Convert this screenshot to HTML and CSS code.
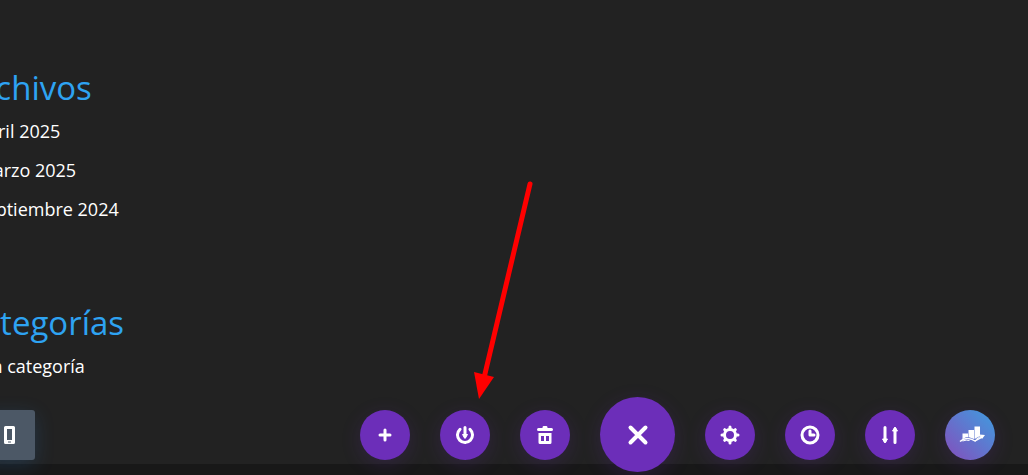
FILE: index.html
```
<!DOCTYPE html>
<html lang="es">
<head>
  <meta charset="UTF-8" />
  <meta name="viewport" content="width=device-width, initial-scale=1.0" />
  <title>Archivos</title>
  <link rel="stylesheet" href="styles.css">
</head>
<body>
  <main class="sidebar">
    <section class="widget">
      <h2>Archivos</h2>
      <ul>
        <li><a href="#">abril 2025</a></li>
        <li><a href="#">marzo 2025</a></li>
        <li><a href="#">septiembre 2024</a></li>
      </ul>
    </section>
    <section class="widget">
      <h2>Categorías</h2>
      <ul>
        <li><a href="#">Sin categoría</a></li>
      </ul>
    </section>
  </main>
  <footer class="footer"></footer>

  <div class="builder-bar">
    <button class="device" type="button" aria-label="Vista de teléfono">
      <svg width="12" height="20" viewBox="0 0 12 20"><path fill="#fff" fill-rule="evenodd" d="M1.500 1h8a1.500 1.500 0 0 1 1.500 1.500v15a1.500 1.500 0 0 1-1.500 1.500h-8A1.500 1.500 0 0 1 0 17.500v-15A1.500 1.500 0 0 1 1.500 1zM3 4v11h5V4zM4 16.500v1h3v-1z"/></svg>
    </button>

    <div class="actions">
      <button class="round" type="button" aria-label="Añadir de la biblioteca">
        <svg width="28" height="28" viewBox="0 0 28 28"><path class="line" d="M14 9v10M9 14h10"/></svg>
      </button>
      <button class="round" type="button" aria-label="Guardar en la biblioteca">
        <svg width="28" height="28" viewBox="0 0 28 28">
          <path class="line" d="M9 8.300a7.500 7.500 0 1 0 10 0M14 6.500v9"/>
          <path fill="#fff" stroke="#fff" stroke-linejoin="round" d="M11.500 13.500h5L14 17.500z"/>
        </svg>
      </button>
      <button class="round" type="button" aria-label="Vaciar diseño">
        <svg width="28" height="28" viewBox="0 0 28 28"><path fill="#fff" fill-rule="evenodd" d="M11.500 6.500q0-1.500 1-1.500h3q1 0 1 1.500V7h4q1.500 0 1.500 1.500T20.500 10h-13Q6 10 6 8.500T7.500 7h4zM7.500 12h13v9.500q0 1.500-1.500 1.500H9q-1.500 0-1.500-1.500zM10 15v5h3v-5zM15 15v5h3v-5z"/></svg>
      </button>
      <button class="round big" type="button" aria-label="Cerrar">
        <svg width="28" height="28" viewBox="0 0 28 28"><path class="line thick" d="M6.500 6.500l15 15M21.500 6.500l-15 15"/></svg>
      </button>
      <button class="round" type="button" aria-label="Ajustes de página">
        <svg width="28" height="28" viewBox="0 0 28 28">
          <circle class="line" cx="14" cy="14" r="5.500"/>
          <path class="line" d="M14 6v2M14 20v2M6 14h2M20 14h2M8.700 8.700l1 1M18.300 18.300l1 1M19.300 8.700l-1 1M9.700 18.300l-1 1"/>
        </svg>
      </button>
      <button class="round" type="button" aria-label="Historial">
        <svg width="28" height="28" viewBox="0 0 28 28"><circle class="line" cx="14" cy="14" r="8"/><path class="line" d="M14 10v4h4"/></svg>
      </button>
      <button class="round" type="button" aria-label="Portabilidad">
        <svg width="28" height="28" viewBox="0 0 28 28">
          <path class="line" d="M9 6.500V20M19 8v13.500"/>
          <path fill="#fff" stroke="#fff" stroke-linejoin="round" d="M6.500 18h5L9 22zM16.500 10h5L19 6z"/>
        </svg>
      </button>
      <button class="round seo" type="button" aria-label="SEO">
        <svg width="28" height="28" viewBox="0 0 28 28">
          <path fill="#fff" d="M6.500 12.500H12V16l-2 .2-3.500 2zM12.500 9H18v9l-5.500-2zM18.500 5.500H24v9.500l-5.500 3z"/>
          <path fill="none" stroke="#fff" stroke-width="1.500" d="M4 20.500q4-3.500 8-3t7 2.500L26 16"/>
          <path fill="none" stroke="#fff" d="M6.500 20q4-1.500 7-.5M20 18.500l5-3.500"/>
          <path fill="#fff" d="M23.500 13.500l5.500.5-3 4z"/>
        </svg>
      </button>
    </div>
  </div>

  <svg class="arrow" width="64" height="224" viewBox="0 0 64 224" aria-hidden="true">
    <path d="M60 8L14 202" stroke="#f00" stroke-width="5" stroke-linecap="round"/>
    <path d="M4 196l20 5L9 223z" fill="#f00"/>
  </svg>
</body>
</html>
```
FILE: styles.css
```
:root {
  --bg-color: #222;
  --title-color: #2ea3f2;
  --purple: #6c2eb9;
}

* {
  box-sizing: border-box;
}
body {
  display: flex;
  flex-direction: column;
  min-height: 100vh;
  margin: 0;
  overflow: hidden;
  font-family: "Open Sans", Arial, sans-serif;
  background: var(--bg-color);
  color: #fff;
}
.sidebar {
  flex: 1;
  margin-left: -39px;
  padding-top: 68px;
}
.widget + .widget {
  margin-top: 80px;
}
.widget h2 {
  margin: 0;
  font-size: 33px;
  font-weight: 400;
  line-height: 40px;
  color: var(--title-color);
}
.widget ul {
  display: grid;
  gap: 12px;
  margin: 10px 0 0;
  padding: 0 0 0 16px;
  list-style: none;
}
.widget li {
  font-size: 18px;
  line-height: 27px;
}
.widget a {
  color: #fff;
  text-decoration: none;
}
.footer {
  height: 11px;
  background: #181818;
}

.builder-bar {
  position: fixed;
  left: 0;
  right: 0;
  bottom: 3px;
  display: flex;
  align-items: center;
  justify-content: space-between;
  padding-right: 33px;
}
button {
  display: flex;
  align-items: center;
  justify-content: center;
  padding: 0;
  border: none;
  cursor: pointer;
}
.device {
  width: 50px;
  height: 50px;
  margin-left: -15px;
  border-radius: 3px;
  background: #4c5866;
  box-shadow: 0 5px 20px rgba(43, 135, 218, 0.2);
}
.actions {
  display: flex;
  align-items: center;
  gap: 30px;
}
.round {
  width: 50px;
  height: 50px;
  border-radius: 50%;
  background: var(--purple);
  box-shadow: 0 5px 20px rgba(108, 46, 185, 0.2);
}
.round.big {
  width: 75px;
  height: 75px;
}
.round.seo {
  background: linear-gradient(45deg, #7e55bf 10%, #4595dc 90%);
}
.round svg {
  overflow: visible;
}
.line {
  fill: none;
  stroke: #fff;
  stroke-width: 3;
  stroke-linecap: round;
  stroke-linejoin: round;
}
.thick {
  stroke-width: 4;
}

.arrow {
  position: absolute;
  left: 470px;
  top: 176px;
  fill: none;
}
```
